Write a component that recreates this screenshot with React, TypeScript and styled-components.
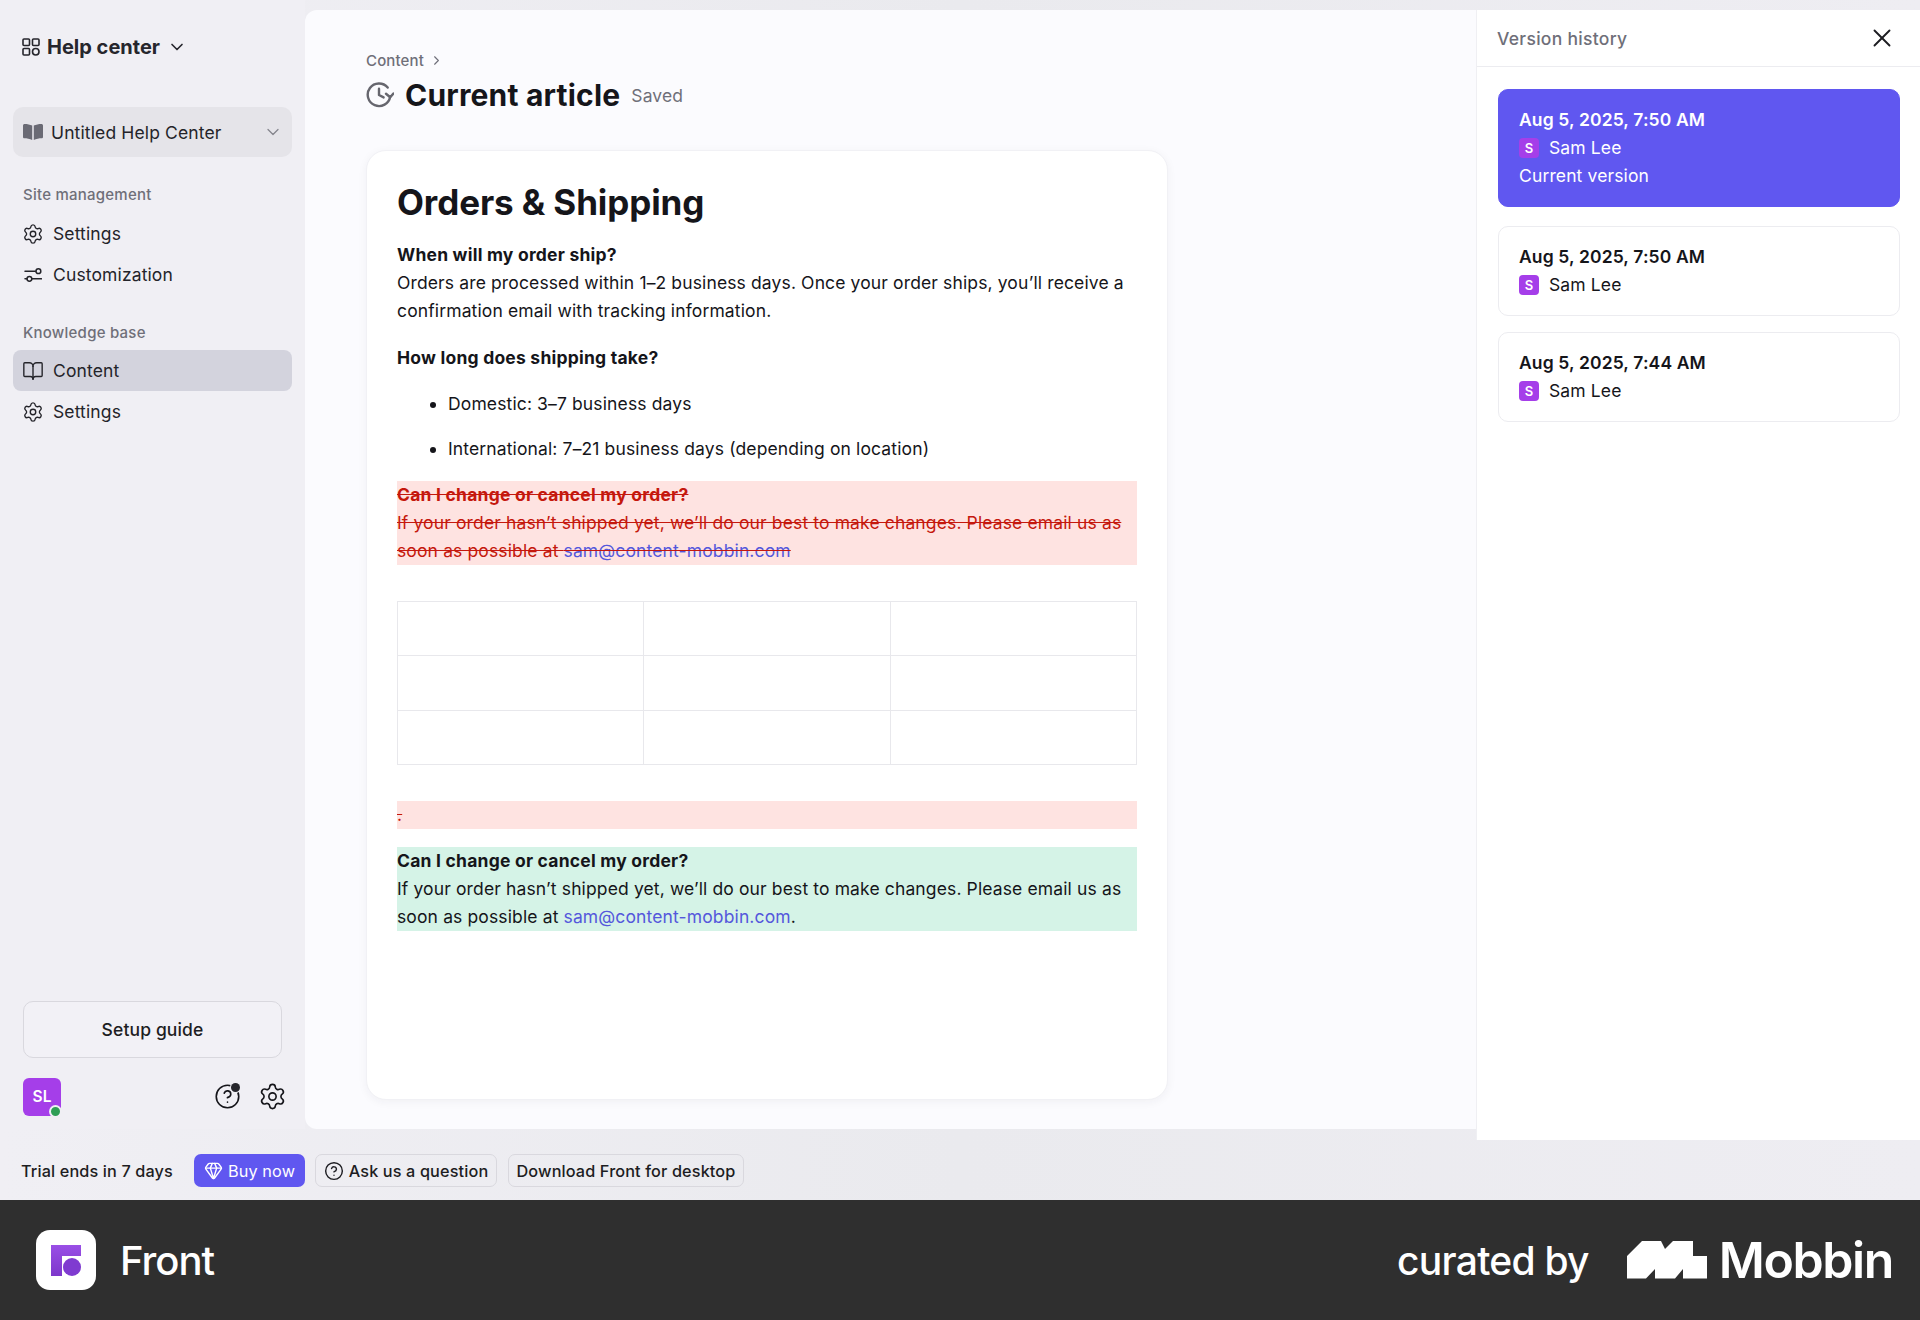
import React from "react";
import styled, { createGlobalStyle } from "styled-components";
import { BookOpen, ChevronDown, ChevronRight, CircleHelp, Gem, Settings, X } from "lucide-react";

const Global = createGlobalStyle`
  html, body { margin: 0; padding: 0; background: #f0eff4; }
  * { box-sizing: border-box; }
  body { font-family: Inter, "Noto Sans", sans-serif; color: #15151a; letter-spacing: 0.13px; }
`;

const Page = styled.div`
  width: 1920px;
  height: 1320px;
  display: flex;
  flex-direction: column;
  overflow: hidden;
`;
const Workspace = styled.div`
  position: relative;
  height: 1200px;
  display: flex;
  flex-direction: column;
  background: linear-gradient(90deg, #f0eff4 0%, #eaeaee 50%, #eeedf2 100%);
`;
const Upper = styled.div`
  height: 1129px;
  display: flex;
`;
const Sidebar = styled.aside`
  width: 305px;
  flex: none;
  display: flex;
  flex-direction: column;
  background: #f0eff4;
  padding: 31px 13px 13px;
`;
const BrandRow = styled.div`
  display: flex;
  align-items: center;
  height: 32px;
  padding-left: 9px;
  gap: 7px;
  font-size: 20px;
  font-weight: 700;
  letter-spacing: 0;
  color: #26262c;
`;
const SiteSelect = styled.div`
  margin-top: 44px;
  height: 50px;
  display: flex;
  align-items: center;
  gap: 8px;
  padding: 0 9px 0 10px;
  border-radius: 10px;
  background: #e5e4e9;
  font-size: 17.5px;
  color: #24242a;
  span { flex: 1; }
`;
const SectionLabel = styled.div<{ $top: number }>`
  margin-top: ${(p) => p.$top}px;
  height: 21px;
  line-height: 21px;
  padding-left: 10px;
  font-size: 15px;
  font-weight: 500;
  letter-spacing: 0.24px;
  color: #6f6f79;
`;
const NavItem = styled.div<{ $active?: boolean; $top?: number }>`
  height: 41px;
  margin-top: ${(p) => p.$top ?? 0}px;
  display: flex;
  align-items: center;
  gap: 9px;
  padding-left: 9px;
  border-radius: 8px;
  font-size: 17.5px;
  color: #24242a;
  background: ${(p) => (p.$active ? "#d3d3dd" : "transparent")};
`;
const NavIcon = styled.span`
  width: 22px;
  height: 22px;
  display: flex;
  align-items: center;
  justify-content: center;
`;
const SideGap = styled.div`
  flex: 1;
`;
const SetupButton = styled.div`
  margin: 0 10px;
  height: 57px;
  display: flex;
  align-items: center;
  justify-content: center;
  border: 1.5px solid #d9d8de;
  border-radius: 10px;
  background: #f2f1f6;
  font-size: 17.5px;
  font-weight: 500;
  color: #1d1d22;
`;
const UserRow = styled.div`
  margin: 19px 5px 0 10px;
  height: 39px;
  display: flex;
  align-items: center;
  gap: 17.5px;
`;
const Avatar = styled.div`
  position: relative;
  width: 38px;
  height: 38px;
  margin-right: auto;
  display: flex;
  align-items: center;
  justify-content: center;
  border-radius: 6px;
  background: #a53ee9;
  color: #fff;
  font-size: 15.5px;
  font-weight: 600;
`;
const OnlineDot = styled.i`
  position: absolute;
  right: -1px;
  bottom: -2px;
  width: 13px;
  height: 13px;
  border-radius: 50%;
  background: #2f9e55;
  border: 2px solid #f0eff4;
`;
const HelpWrap = styled.div`
  position: relative;
  display: flex;
  width: 27px;
  height: 27px;
`;
const HelpDot = styled.i`
  position: absolute;
  right: 1px;
  top: 0;
  width: 9px;
  height: 9px;
  border-radius: 50%;
  background: #26262c;
  box-shadow: 0 0 0 1px #f0eff4;
`;
const Main = styled.main`
  flex: 1;
  margin-top: 10px;
  padding: 40px 0 29px 61px;
  display: flex;
  flex-direction: column;
  border-radius: 12px 0 0 12px;
  background: #fbfbfe;
`;
const Crumb = styled.div`
  height: 20px;
  display: flex;
  align-items: center;
  gap: 5px;
  font-size: 15px;
  font-weight: 500;
  color: #6f6f79;
`;
const TitleRow = styled.div`
  margin-top: 6px;
  height: 38px;
  display: flex;
  align-items: center;
  gap: 11px;
`;
const PageTitle = styled.h1`
  margin: 0;
  font-size: 30px;
  font-weight: 700;
  letter-spacing: 0.19px;
  color: #15151a;
`;
const Saved = styled.span`
  font-size: 17.5px;
  color: #6f6f79;
`;
const ArticleCard = styled.article`
  margin-top: 36px;
  width: 802px;
  flex: 1;
  padding: 29px 30px 0;
  background: #fff;
  border-radius: 20px;
  border: 1px solid #f1f1f5;
  box-shadow: 0 2px 10px rgba(30, 30, 60, 0.05);
`;
const ArticleTitle = styled.h2`
  margin: 0 0 17px;
  font-size: 35px;
  line-height: 44px;
  font-weight: 700;
  letter-spacing: -0.1px;
  color: #15151a;
`;
const Para = styled.p<{ $after?: number }>`
  margin: 0 0 ${(p) => p.$after ?? 17.5}px;
  font-size: 17.5px;
  line-height: 28px;
  color: #15151a;
`;
const Strong = styled.strong`
  font-weight: 700;
  letter-spacing: 0.22px;
`;
const Bullets = styled.ul`
  margin: 0;
  padding: 0 0 0 51px;
  font-size: 17.5px;
  line-height: 28px;
`;
const Bullet = styled.li`
  margin-bottom: 17.5px;
`;
const Removed = styled.div`
  background: #fee3e1;
  color: #c5180d;
  text-decoration: line-through;
  font-size: 17.5px;
  line-height: 28px;
`;
const RemovedStub = styled(Removed)`
  margin-top: 36px;
  height: 27.5px;
  line-height: 27.5px;
`;
const Added = styled.div`
  margin-top: 18px;
  background: #d5f3e7;
  color: #15151a;
  font-size: 17.5px;
  line-height: 28px;
`;
const MailLink = styled.span`
  color: #5457dc;
`;
const DiffTable = styled.div`
  margin-top: 36px;
  display: grid;
  grid-template-columns: repeat(3, 1fr);
  grid-auto-rows: 54.6px;
  border-top: 1px solid #e8e8ec;
  border-left: 1px solid #e8e8ec;
`;
const Cell = styled.div`
  border-right: 1px solid #e8e8ec;
  border-bottom: 1px solid #e8e8ec;
`;
const TrialBar = styled.div`
  flex: 1;
  display: flex;
  align-items: center;
  padding: 12px 0 0 21px;
  font-size: 16.25px;
  color: #1d1d22;
`;
const TrialText = styled.span`
  width: 173px;
  font-weight: 500;
`;
const BuyButton = styled.div`
  width: 111px;
  height: 33px;
  display: flex;
  align-items: center;
  justify-content: center;
  gap: 5px;
  border-radius: 7px;
  background: #6057f0;
  color: #fff;
`;
const GhostButton = styled.div<{ $w: number; $left: number }>`
  width: ${(p) => p.$w}px;
  height: 33px;
  margin-left: ${(p) => p.$left}px;
  display: flex;
  align-items: center;
  justify-content: center;
  gap: 5px;
  border: 1.5px solid #d9d8de;
  border-radius: 7px;
  font-weight: 500;
`;
const Drawer = styled.section`
  position: absolute;
  top: 10px;
  left: 1476px;
  width: 444px;
  height: 1130px;
  background: #fff;
  border-left: 1px solid #efeff3;
`;
const DrawerHead = styled.header`
  height: 57px;
  padding: 0 23px 0 20px;
  display: flex;
  align-items: center;
  justify-content: space-between;
  border-bottom: 1px solid #ececf0;
  font-size: 17.5px;
  font-weight: 500;
  letter-spacing: 0.3px;
  color: #6f6f79;
`;
const VersionList = styled.div`
  padding: 22px 20px 0 21px;
  display: flex;
  flex-direction: column;
  gap: 16.5px;
`;
const VersionCard = styled.div<{ $current?: boolean }>`
  padding: 16px 20px;
  margin-bottom: ${(p) => (p.$current ? 2 : 0)}px;
  border-radius: 10px;
  border: 1px solid ${(p) => (p.$current ? "#6057f0" : "#ececf0")};
  background: ${(p) => (p.$current ? "#6057f0" : "#fff")};
  color: ${(p) => (p.$current ? "#fff" : "#15151a")};
  font-size: 17.5px;
  line-height: 28px;
`;
const VersionDate = styled.div`
  font-weight: 600;
`;
const Author = styled.div`
  display: flex;
  align-items: center;
  gap: 10px;
`;
const AuthorChip = styled.span`
  width: 20px;
  height: 20px;
  display: flex;
  align-items: center;
  justify-content: center;
  border-radius: 4px;
  background: #a53ee9;
  color: #fff;
  font-size: 13px;
  font-weight: 600;
`;
const Footer = styled.footer`
  height: 120px;
  flex: none;
  display: flex;
  align-items: center;
  padding: 0 27px 0 36px;
  background: #2f2f2f;
  color: #fff;
`;
const AppTile = styled.div`
  width: 60px;
  height: 60px;
  display: flex;
  align-items: center;
  justify-content: center;
  border-radius: 14px;
  background: #fff;
`;
const AppName = styled.span`
  margin-left: 24px;
  margin-right: auto;
  font-size: 40px;
  font-weight: 500;
  letter-spacing: -1px;
`;
const Curated = styled.span`
  margin-right: 38px;
  font-size: 39px;
  font-weight: 500;
  letter-spacing: -0.75px;
`;
const MobbinName = styled.span`
  margin-left: 12px;
  font-size: 50px;
  font-weight: 600;
  letter-spacing: -1.4px;
`;

const GridIcon = () => (
  <svg width="18" height="18" viewBox="0 0 18 18" fill="none" stroke="#26262c" strokeWidth="1.6">
    <rect x="1" y="1" width="6.5" height="6.5" rx="1" />
    <rect x="10.5" y="1" width="6.5" height="6.5" rx="1" />
    <rect x="1" y="10.5" width="6.5" height="6.5" rx="1" />
    <circle cx="13.75" cy="13.75" r="3.25" />
  </svg>
);
const FilledBook = () => (
  <svg width="20" height="16" viewBox="0 0 20 16" fill="#6a6a74">
    <path d="M0 1.5C0 .6.7 0 1.6 0c2.7 0 5.4.5 7.6 1.6V16C7 14.9 3.6 14.3 1.4 14.3.6 14.3 0 13.7 0 12.9Z" />
    <path d="M20 1.5C20 .6 19.3 0 18.4 0c-2.7 0-5.4.5-7.6 1.6V16c2.2-1.1 5.6-1.7 7.8-1.7.8 0 1.4-.6 1.4-1.4Z" />
  </svg>
);
const SlidersIcon = () => (
  <svg width="18" height="14" viewBox="0 0 18 14" fill="none" stroke="#24242a" strokeWidth="1.5">
    <path d="M1 3.2h10.5M1 10.8h2M8 10.8h9.5" strokeLinecap="round" />
    <circle cx="14.4" cy="3.2" r="2.4" />
    <circle cx="5.4" cy="10.8" r="2.4" />
  </svg>
);
const HistoryIcon = () => (
  <svg width="28" height="26" viewBox="0 0 28 26" fill="none" stroke="#66666e" strokeWidth="2.4" strokeLinecap="round" strokeLinejoin="round">
    <path d="M24.2 14.5A11.3 11.3 0 1 1 21.7 5.5" />
    <path d="M13 6.8V13l4.6 2.4" />
    <path d="M20 11.8l4.2 3.4 3.2-3.6" />
  </svg>
);
const FrontMark = () => (
  <svg width="30" height="31" viewBox="0 0 30 31">
    <defs>
      <linearGradient id="frontFill" x1="0" y1="0" x2="0" y2="1">
        <stop offset="0" stopColor="#9a4fe6" />
        <stop offset="1" stopColor="#7d37cb" />
      </linearGradient>
    </defs>
    <path d="M0 0H30V11H11V31H0Z" fill="url(#frontFill)" />
    <circle cx="21" cy="22" r="9" fill="#7f3bd0" />
  </svg>
);
const MobbinMark = () => (
  <svg width="80" height="38" viewBox="0 0 80 38" fill="#fff">
    <path d="M0 15 15 0H34L38 8 46 0H66V15H80V37.5H56V28L48 37.5H28V28L19 37.5H0Z" />
  </svg>
);

const Versions = [
  { date: "Aug 5, 2025, 7:50 AM", current: true },
  { date: "Aug 5, 2025, 7:50 AM" },
  { date: "Aug 5, 2025, 7:44 AM" },
];

export default function App() {
  return (
    <Page>
      <Global />
      <Workspace>
        <Upper>
          <Sidebar>
            <BrandRow>
              <GridIcon />
              Help center
              <ChevronDown size={20} strokeWidth={2} />
            </BrandRow>
            <SiteSelect>
              <FilledBook />
              <span>Untitled Help Center</span>
              <ChevronDown size={20} strokeWidth={1.5} color="#85858d" />
            </SiteSelect>
            <SectionLabel $top={27}>Site management</SectionLabel>
            <NavItem $top={8}>
              <NavIcon>
                <Settings size={22} strokeWidth={1.5} />
              </NavIcon>
              Settings
            </NavItem>
            <NavItem>
              <NavIcon>
                <SlidersIcon />
              </NavIcon>
              Customization
            </NavItem>
            <SectionLabel $top={27}>Knowledge base</SectionLabel>
            <NavItem $active $top={7}>
              <NavIcon>
                <BookOpen size={22} strokeWidth={1.5} />
              </NavIcon>
              Content
            </NavItem>
            <NavItem>
              <NavIcon>
                <Settings size={22} strokeWidth={1.5} />
              </NavIcon>
              Settings
            </NavItem>
            <SideGap />
            <SetupButton>Setup guide</SetupButton>
            <UserRow>
              <Avatar>
                SL
                <OnlineDot />
              </Avatar>
              <HelpWrap>
                <CircleHelp size={27} strokeWidth={1.45} />
                <HelpDot />
              </HelpWrap>
              <Settings size={29} strokeWidth={1.35} />
            </UserRow>
          </Sidebar>
          <Main>
            <Crumb>
              Content
              <ChevronRight size={15} strokeWidth={1.8} />
            </Crumb>
            <TitleRow>
              <HistoryIcon />
              <PageTitle>Current article</PageTitle>
              <Saved>Saved</Saved>
            </TitleRow>
            <ArticleCard>
              <ArticleTitle>Orders &amp; Shipping</ArticleTitle>
              <Para $after={19}>
                <Strong>When will my order ship?</Strong>
                <br />
                Orders are processed within 1–2 business days. Once your order ships, you’ll receive a confirmation email with tracking information.
              </Para>
              <Para>
                <Strong>How long does shipping take?</Strong>
              </Para>
              <Bullets>
                <Bullet>Domestic: 3–7 business days</Bullet>
                <Bullet>International: 7–21 business days (depending on location)</Bullet>
              </Bullets>
              <Removed>
                <Strong>Can I change or cancel my order?</Strong>
                <br />
                If your order hasn’t shipped yet, we’ll do our best to make changes. Please email us as soon as possible at <MailLink>sam@content-mobbin.com</MailLink>
              </Removed>
              <DiffTable>
                {Array.from({ length: 9 }, (_, i) => (
                  <Cell key={i} />
                ))}
              </DiffTable>
              <RemovedStub>.</RemovedStub>
              <Added>
                <Strong>Can I change or cancel my order?</Strong>
                <br />
                If your order hasn’t shipped yet, we’ll do our best to make changes. Please email us as soon as possible at <MailLink>sam@content-mobbin.com</MailLink>.
              </Added>
            </ArticleCard>
          </Main>
        </Upper>
        <TrialBar>
          <TrialText>Trial ends in 7 days</TrialText>
          <BuyButton>
            <Gem size={19} strokeWidth={1.8} />
            Buy now
          </BuyButton>
          <GhostButton $w={182} $left={10}>
            <CircleHelp size={20} strokeWidth={1.7} />
            Ask us a question
          </GhostButton>
          <GhostButton $w={236} $left={11}>Download Front for desktop</GhostButton>
        </TrialBar>
        <Drawer>
          <DrawerHead>
            Version history
            <X size={30} strokeWidth={1.5} color="#1d1d22" />
          </DrawerHead>
          <VersionList>
            {Versions.map((v, i) => (
              <VersionCard key={i} $current={v.current}>
                <VersionDate>{v.date}</VersionDate>
                <Author>
                  <AuthorChip>S</AuthorChip>
                  Sam Lee
                </Author>
                {v.current && <div>Current version</div>}
              </VersionCard>
            ))}
          </VersionList>
        </Drawer>
      </Workspace>
      <Footer>
        <AppTile>
          <FrontMark />
        </AppTile>
        <AppName>Front</AppName>
        <Curated>curated by</Curated>
        <MobbinMark />
        <MobbinName>Mobbin</MobbinName>
      </Footer>
    </Page>
  );
}
